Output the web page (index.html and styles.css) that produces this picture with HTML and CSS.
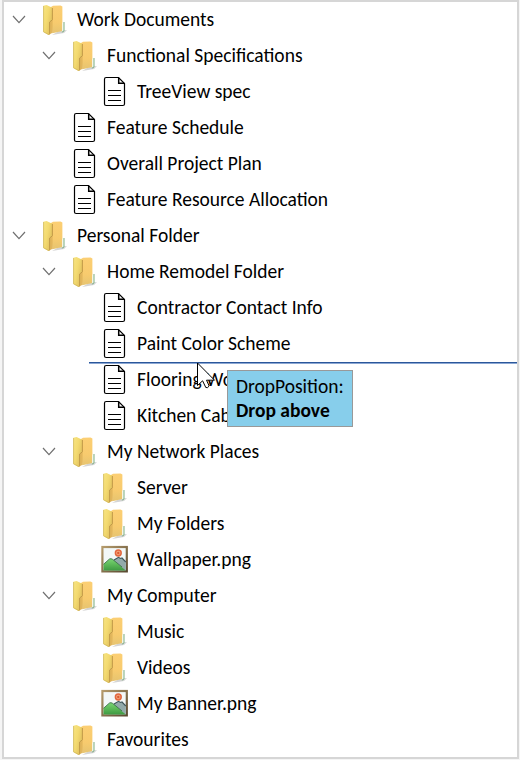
FILE: index.html
```html
<!DOCTYPE html>
<html lang="en">
<head>
<meta charset="utf-8">
<title>Documents</title>
<link rel="stylesheet" href="styles.css">
</head>
<body>
<svg class="defs" aria-hidden="true">
  <defs>
    <linearGradient id="flap" x1="0" y1="0" x2="1" y2=".6"><stop offset="0" stop-color="#f8e582"/><stop offset=".5" stop-color="#f3da70"/><stop offset="1" stop-color="#dfbe5c"/></linearGradient>
    <linearGradient id="panel" x1="0" y1="0" x2="0" y2="1"><stop offset="0" stop-color="#fccf74"/><stop offset=".6" stop-color="#f8cb6e"/><stop offset="1" stop-color="#e6c470"/></linearGradient>
    <linearGradient id="hill" x1="0" y1="0" x2="0" y2="1"><stop offset="0" stop-color="#7bd675"/><stop offset=".5" stop-color="#5cb958"/><stop offset="1" stop-color="#3f9a43"/></linearGradient>
    <linearGradient id="frame" x1="0" y1="0" x2="1" y2="1"><stop offset="0" stop-color="#b59b6c"/><stop offset="1" stop-color="#594a31"/></linearGradient>
    <symbol id="folder" viewBox="0 0 30 36">
      <path d="M19 29 L27 28 L24 31 L12 33Z" fill="#d4d4d4"/>
      <path d="M11 5 L13 3.7 L20.5 3.5 L22.4 4.5 V29 L12.3 31.2Z" fill="url(#panel)"/>
      <path d="M9.2 19.5 L12.6 17.5 V30.7 L9.2 32.5Z" fill="#e2b65c"/>
      <path d="M3.3 3.8 L6.5 3 L12.4 5.7 V17.8 L9.6 20 V32.8 L8.5 33 L3.3 30Z" fill="url(#flap)"/>
      <path d="M3.6 4 V29.8 L9 32.7" fill="none" stroke="#cfb75e" stroke-width=".8"/>
      <path d="M12.4 6 V17.8 L9.6 20 V32.3" fill="none" stroke="#c29b49" stroke-width="1"/>
      <path d="M22.2 21 L24.2 20 V28.5 L22.2 30Z" fill="#f4f8ee"/>
      <path d="M24 20 V29 L21.9 30.2" fill="none" stroke="#7fae84" stroke-width="1"/>
    </symbol>
    <symbol id="doc" viewBox="0 0 30 36">
      <path d="M6.2 3.5 H18.5 L24.5 9.5 V30 Q24.5 31.5 22.8 31.5 H6.2 Q4.5 31.5 4.5 30 V5.2 Q4.5 3.5 6.2 3.5Z" fill="#fff" stroke="#000" stroke-width="1.2"/>
      <path d="M18.7 3.8 V9.3 H24.2" fill="none" stroke="#000" stroke-width="1.5"/>
      <path d="M8 16.5 H21 M8 21.5 H21 M8 26.5 H21" stroke="#000" stroke-width="1"/>
    </symbol>
    <symbol id="picture" viewBox="0 0 30 36">
      <rect x="2.4" y="5" width="24.4" height="24.4" fill="#f3f8f8" stroke="url(#frame)" stroke-width="2.2"/>
      <circle cx="18.3" cy="11" r="2.9" fill="#f4a67f" stroke="#e2683f" stroke-width="1.5"/>
      <circle cx="18.3" cy="11" r="1.2" fill="#dc5b31"/>
      <path d="M12 19 L18.5 15.3 L20.5 16.5 L22 16 L25.8 20 V28.3 H14Z" fill="#92aaaa"/>
      <path d="M14 18 L18.5 15.3 L20.5 16.5 L22 16 L25.8 20" fill="none" stroke="#40575c" stroke-width="1.1"/>
      <path d="M3.5 22.5 L9.5 17 Q11 16.2 12.5 17.3 L25.7 28.4 H3.5Z" fill="url(#hill)"/>
      <path d="M3.5 22.3 L9.5 17 Q11 16.2 12.5 17.3 L22 25" fill="none" stroke="#3c7048" stroke-width=".9"/>
    </symbol>
    <symbol id="chevron" viewBox="0 0 14 10">
      <path d="M1 1 L7 7.6 L13 1" fill="none" stroke="#707070" stroke-width="1.2"/>
    </symbol>
  </defs>
</svg>
<main class="tree" id="tree"></main>
<div class="drop-line"></div>
<div class="drop-tip"><span class="tip-label">DropPosition:</span><strong class="tip-label">Drop above</strong></div>
<svg class="pointer" viewBox="0 0 22 29"><path d="M1.5 1 V23.5 L6.6 18.8 L9.8 25.5 Q11.5 26.5 13.2 24 L10.5 18.2 H18.5Z" fill="#fff" stroke="#000" stroke-width="1"/></svg>
<script src="tree.js"></script>
</body>
</html>
```
FILE: styles.css
```css
* { box-sizing: border-box; }
body {
  margin: 0;
  width: 520px;
  height: 760px;
  overflow: hidden;
  position: relative;
  background: #f5f5f5;
  color: #000;
  font-family: Carlito, Lato, sans-serif;
  font-size: 19.5px;
}
.defs { position: absolute; width: 0; height: 0; }
.tree {
  width: 517px;
  height: 759px;
  margin-left: 2px;
  background: #fff;
  border: 2px solid #d6d6d6;
}
.row { display: flex; align-items: center; height: 36px; }
.level-1 { padding-left: 30px; }
.level-2 { padding-left: 60px; }
.toggle { width: 14px; height: 10px; margin: 0 14px 0 8px; flex: none; }
.icon { width: 30px; height: 36px; flex: none; }
.label { margin-left: 7px; padding-bottom: 2px; white-space: nowrap; line-height: 24px; }
.drop-line {
  position: absolute;
  left: 89px;
  top: 362px;
  width: 428px;
  height: 2px;
  background: linear-gradient(#2b579a 50%, #8ba7d3 50%);
}
.drop-tip {
  position: absolute;
  left: 227px;
  top: 370px;
  width: 126px;
  height: 57px;
  padding: 3px 8px;
  display: flex;
  flex-direction: column;
  align-items: flex-start;
  background: #87ceeb;
  border: 1px solid #999;
}
.tip-label { display: block; white-space: nowrap; line-height: 24px; }
.pointer { position: absolute; left: 196px; top: 362px; width: 22px; height: 29px; }
```
FILE: tree.js
```js
// level, icon, label, expandable
const rows = [
  [0, "folder", "Work Documents", true],
  [1, "folder", "Functional Specifications", true],
  [2, "doc", "TreeView spec", false],
  [1, "doc", "Feature Schedule", false],
  [1, "doc", "Overall Project Plan", false],
  [1, "doc", "Feature Resource Allocation", false],
  [0, "folder", "Personal Folder", true],
  [1, "folder", "Home Remodel Folder", true],
  [2, "doc", "Contractor Contact Info", false],
  [2, "doc", "Paint Color Scheme", false],
  [2, "doc", "Flooring Wo", false],
  [2, "doc", "Kitchen Cab", false],
  [1, "folder", "My Network Places", true],
  [2, "folder", "Server", false],
  [2, "folder", "My Folders", false],
  [2, "picture", "Wallpaper.png", false],
  [1, "folder", "My Computer", true],
  [2, "folder", "Music", false],
  [2, "folder", "Videos", false],
  [2, "picture", "My Banner.png", false],
  [1, "folder", "Favourites", false]
];
document.getElementById("tree").innerHTML = rows.map(([level, icon, text, open]) =>
  `<div class="row level-${level}"><svg class="toggle">${open ? '<use href="#chevron"/>' : ""}</svg><svg class="icon"><use href="#${icon}"/></svg><span class="label">${text}</span></div>`
).join("");
```
